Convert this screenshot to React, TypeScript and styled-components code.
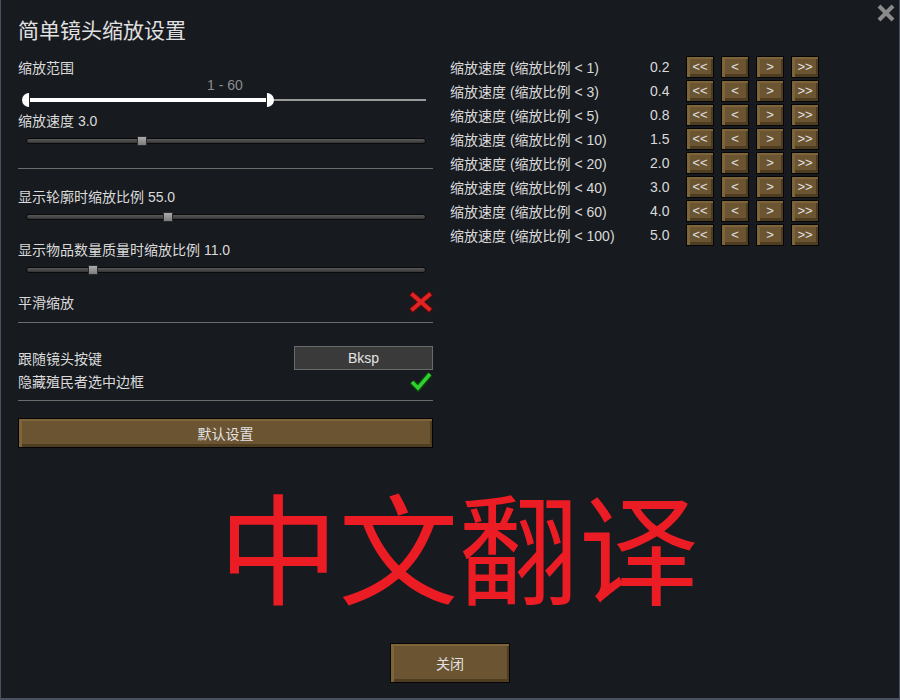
import React from 'react';
import styled, { createGlobalStyle } from 'styled-components';

const GlobalStyle = createGlobalStyle`
  html, body {
    margin: 0;
    padding: 0;
    background: #171a1f;
  }
  body {
    font-family: 'Liberation Sans', 'Noto Sans CJK SC', sans-serif;
    color: #dadada;
  }
`;

const Window = styled.div`
  position: relative;
  width: 900px;
  height: 700px;
  box-sizing: border-box;
  background: #171a1f;
  border-left: 1px solid #4a5262;
  border-right: 1px solid #4a5262;
  border-bottom: 2px solid #4a5262;
  padding: 16px 17px 0 17px;
  display: flex;
  flex-direction: column;
  overflow: hidden;
`;

const Title = styled.h1`
  margin: 0;
  font-size: 21px;
  line-height: 30px;
  font-weight: normal;
  color: #e0e0e0;
`;

const CloseX = styled.svg`
  position: absolute;
  top: 3px;
  right: 3px;
`;

const Columns = styled.div`
  margin-top: 10px;
  display: grid;
  grid-template-columns: 415px 1fr;
  column-gap: 17px;
`;

const LeftCol = styled.div`
  display: flex;
  flex-direction: column;
  padding-top: 2px;
`;

const Label = styled.div<{ $top?: number }>`
  font-size: 14px;
  line-height: 20px;
  margin-top: ${(p) => p.$top ?? 0}px;
`;

const RangeValue = styled.div`
  font-size: 14px;
  line-height: 14px;
  color: #8c8c8c;
  text-align: center;
  width: 414px;
`;

const RangeBox = styled.div`
  position: relative;
  height: 16px;
  margin: 0 7px 0 4px;
`;

const RangeRest = styled.div`
  position: absolute;
  left: 250px;
  right: 0;
  top: 7px;
  height: 2px;
  background: #9a9a9a;
`;

const RangeFill = styled.div`
  position: absolute;
  left: 4px;
  width: 246px;
  top: 6px;
  height: 4px;
  background: #ffffff;
`;

const Handle = styled.div<{ $side: 'left' | 'right' }>`
  position: absolute;
  top: 1px;
  width: 8px;
  height: 14px;
  background: #ffffff;
  box-sizing: border-box;
  ${(p) =>
    p.$side === 'left'
      ? `left: 0; border-radius: 8px 0 0 8px; border-right: 1px solid #222;`
      : `left: 244px; border-radius: 0 8px 8px 0; border-left: 1px solid #222;`}
`;

const SliderBox = styled.div`
  position: relative;
  height: 16px;
  margin: 2px 7px 0 8px;
`;

const Track = styled.div`
  position: absolute;
  left: 0;
  right: 0;
  top: 5px;
  height: 6px;
  box-sizing: border-box;
  border-radius: 3px;
  background: linear-gradient(#5a5a5a, #353535);
  border: 1px solid #0a0a0a;
`;

const Thumb = styled.div`
  position: absolute;
  top: 3px;
  width: 10px;
  height: 10px;
  box-sizing: border-box;
  border: 1px solid #2a2a2a;
  background: linear-gradient(#ababab, #7c7c7c);
`;

const Separator = styled.div<{ $top: number; $bottom: number }>`
  height: 1px;
  background: #6d6d6d;
  margin: ${(p) => p.$top}px 0 ${(p) => p.$bottom}px 0;
`;

const OptionRow = styled.div<{ $h: number; $top?: number }>`
  display: flex;
  align-items: center;
  justify-content: space-between;
  height: ${(p) => p.$h}px;
  margin-top: ${(p) => p.$top ?? 0}px;
  font-size: 14px;
`;

const KeyButton = styled.div`
  width: 139px;
  height: 24px;
  box-sizing: border-box;
  background: #3a3a3a;
  border: 1px solid #6a6a6a;
  font-size: 14px;
  line-height: 22px;
  text-align: center;
  color: #e4e4e4;
`;

const BrownButton = styled.div<{ $w: string; $h: number }>`
  width: ${(p) => p.$w};
  height: ${(p) => p.$h}px;
  box-sizing: border-box;
  background: #6b5431;
  border: 1px solid #050505;
  box-shadow: inset 3px 2px 0 #7e6539, inset -2px -3px 0 #4f3d22;
  display: flex;
  align-items: center;
  justify-content: center;
  font-size: 14px;
  color: #e2e2e2;
  flex-shrink: 0;
`;

const RightCol = styled.div`
  display: flex;
  flex-direction: column;
  margin-top: -1px;
`;

const SpeedRow = styled.div`
  display: flex;
  align-items: center;
  height: 24px;
  font-size: 14px;
`;

const SpeedLabel = styled.span`
  width: 200px;
`;

const SpeedValue = styled.span`
  width: 36px;
`;

const StepGroup = styled.div`
  display: flex;
  gap: 7px;
`;

const StepButton = styled(BrownButton)`
  font-size: 13px;
  padding-bottom: 2px;
`;

const BigText = styled.div`
  margin-top: 26px;
  padding-left: 17px;
  text-align: center;
  font-family: 'Noto Sans CJK SC', sans-serif;
  font-size: 120px;
  line-height: 140px;
  color: #ec1c24;
`;

const Footer = styled.div`
  margin-top: auto;
  margin-bottom: 15px;
  display: flex;
  justify-content: center;
`;

const speeds: [string, string][] = [
  ['1', '0.2'],
  ['3', '0.4'],
  ['5', '0.8'],
  ['10', '1.5'],
  ['20', '2.0'],
  ['40', '3.0'],
  ['60', '4.0'],
  ['100', '5.0'],
];

const Slider = ({ pos }: { pos: number }) => (
  <SliderBox>
    <Track />
    <Thumb style={{ left: pos }} />
  </SliderBox>
);

const CrossIcon = () => (
  <svg width="24" height="22" viewBox="0 0 24 22">
    <g strokeLinecap="square">
      <path d="M4 4 L20 18 M20 4 L4 18" stroke="#5a0c0c" strokeWidth="6" />
      <path d="M4 4 L20 18 M20 4 L4 18" stroke="#e02424" strokeWidth="4" />
    </g>
  </svg>
);

const CheckIcon = () => (
  <svg width="24" height="22" viewBox="0 0 24 22">
    <g strokeLinejoin="miter" fill="none">
      <path d="M3 12 L9 18 L21 4" stroke="#0c4a0c" strokeWidth="6" />
      <path d="M3 12 L9 18 L21 4" stroke="#2fd02f" strokeWidth="3.5" />
    </g>
  </svg>
);

export default function App() {
  return (
    <>
      <GlobalStyle />
      <Window>
        <CloseX width="20" height="20" viewBox="0 0 20 20">
          <path d="M3 3 L17 17 M17 3 L3 17" stroke="#8a8a8a" strokeWidth="4" />
        </CloseX>
        <Title>简单镜头缩放设置</Title>
        <Columns>
          <LeftCol>
            <Label>缩放范围</Label>
            <RangeValue>1 - 60</RangeValue>
            <RangeBox>
              <RangeRest />
              <RangeFill />
              <Handle $side="left" />
              <Handle $side="right" />
            </RangeBox>
            <Label $top={3}>缩放速度 3.0</Label>
            <Slider pos={111} />
            <Separator $top={19} $bottom={18} />
            <Label>显示轮廓时缩放比例 55.0</Label>
            <Slider pos={137} />
            <Label $top={15}>显示物品数量质量时缩放比例 11.0</Label>
            <Slider pos={62} />
            <OptionRow $h={20} $top={14}>
              平滑缩放
              <CrossIcon />
            </OptionRow>
            <Separator $top={10} $bottom={23} />
            <OptionRow $h={24}>
              跟随镜头按键
              <KeyButton>Bksp</KeyButton>
            </OptionRow>
            <OptionRow $h={20} $top={1}>
              隐藏殖民者选中边框
              <CheckIcon />
            </OptionRow>
            <Separator $top={9} $bottom={17} />
            <BrownButton $w="100%" $h={30}>
              默认设置
            </BrownButton>
          </LeftCol>
          <RightCol>
            {speeds.map(([lim, val]) => (
              <SpeedRow key={lim}>
                <SpeedLabel>缩放速度 (缩放比例 &lt; {lim})</SpeedLabel>
                <SpeedValue>{val}</SpeedValue>
                <StepGroup>
                  <StepButton $w="28px" $h={22}>&lt;&lt;</StepButton>
                  <StepButton $w="28px" $h={22}>&lt;</StepButton>
                  <StepButton $w="28px" $h={22}>&gt;</StepButton>
                  <StepButton $w="28px" $h={22}>&gt;&gt;</StepButton>
                </StepGroup>
              </SpeedRow>
            ))}
          </RightCol>
        </Columns>
        <BigText>中文翻译</BigText>
        <Footer>
          <BrownButton $w="120px" $h={40}>
            关闭
          </BrownButton>
        </Footer>
      </Window>
    </>
  );
}
